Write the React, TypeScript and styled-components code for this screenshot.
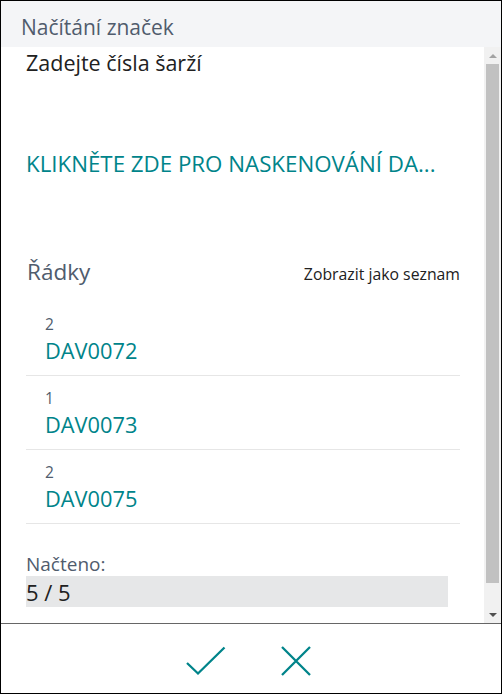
import React from "react";
import styled, { createGlobalStyle } from "styled-components";

const Global = createGlobalStyle`
  html, body { margin: 0; padding: 0; background: #fff; }
  body { font-family: "Open Sans", "Noto Sans", sans-serif; }
  * { box-sizing: border-box; }
`;

const TEAL = "#00848a";
const GRAY = "#505c6d";
const DARK = "#212121";

const Frame = styled.div`
  width: 502px;
  height: 694px;
  border: 1px solid #000;
  display: flex;
  flex-direction: column;
  background: #fff;
  overflow: hidden;
`;

const Header = styled.div`
  height: 46px;
  flex: none;
  background: #f4f5f7;
  padding: 12px 0 0 20px;
  font-size: 21px;
  line-height: 28px;
  color: ${GRAY};
`;

const Body = styled.div`
  flex: 1;
  display: flex;
  min-height: 0;
`;

const Content = styled.div`
  flex: 1;
  display: flex;
  flex-direction: column;
  padding: 2px 24px 0 25px;
`;

const Instruction = styled.div`
  font-size: 21.5px;
  line-height: 28px;
  color: ${DARK};
`;

const ScanLink = styled.div`
  margin-top: 72px;
  font-size: 22.3px;
  line-height: 30px;
  color: ${TEAL};
  white-space: nowrap;
`;

const SectionHead = styled.div`
  margin-top: 78px;
  display: flex;
  align-items: baseline;
  justify-content: space-between;
  padding-left: 1px;
`;

const SectionTitle = styled.div`
  font-size: 22.5px;
  line-height: 30px;
  color: ${GRAY};
`;

const ListToggle = styled.div`
  font-size: 15.8px;
  color: ${DARK};
`;

const List = styled.div`
  margin-top: 15px;
  display: flex;
  flex-direction: column;
`;

const Row = styled.div`
  height: 74px;
  border-bottom: 1px solid #e6e6e6;
  padding: 12px 0 0 19px;
  display: flex;
  flex-direction: column;
`;

const Qty = styled.div`
  font-size: 15.5px;
  line-height: 21px;
  color: ${GRAY};
`;

const Lot = styled.div`
  margin-top: 1px;
  font-size: 21.8px;
  line-height: 30px;
  color: ${TEAL};
`;

const Field = styled.div`
  margin-top: 28px;
  display: flex;
  flex-direction: column;
  padding-right: 12px;
`;

const FieldLabel = styled.div`
  font-size: 19px;
  line-height: 24px;
  color: ${GRAY};
`;

const FieldValue = styled.div`
  height: 31px;
  background: #e6e7e8;
  font-size: 22px;
  line-height: 29px;
  padding: 2px 0 0 0;
  color: ${DARK};
`;

const Scrollbar = styled.div`
  width: 17px;
  flex: none;
  background: #f1f1f1;
  display: flex;
  flex-direction: column;
  align-items: center;
`;

const Arrow = styled.div<{ $down?: boolean }>`
  height: 17px;
  width: 17px;
  flex: none;
  display: flex;
  align-items: center;
  justify-content: center;
  &::after {
    content: "";
    border-left: 4px solid transparent;
    border-right: 4px solid transparent;
    ${(p) => (p.$down ? "border-top: 4px solid #505050;" : "border-bottom: 4px solid #a3a3a3;")}
  }
`;

const Thumb = styled.div`
  width: 13px;
  flex: 1;
  background: #c1c1c1;
  margin: 0 0 23px;
`;

const Footer = styled.div`
  height: 70px;
  flex: none;
  border-top: 1px solid #666;
  display: flex;
  justify-content: center;
  align-items: center;
  gap: 54px;
  padding: 5px 4px 0 0;
`;

const IconButton = styled.button`
  background: none;
  border: none;
  padding: 0;
  display: flex;
  align-items: center;
  justify-content: center;
  cursor: pointer;
`;

const rows = [
  { qty: "2", lot: "DAV0072" },
  { qty: "1", lot: "DAV0073" },
  { qty: "2", lot: "DAV0075" },
];

export default function App() {
  return (
    <>
      <Global />
      <Frame>
        <Header>Načítání značek</Header>
        <Body>
          <Content>
            <Instruction>Zadejte čísla šarží</Instruction>
            <ScanLink>KLIKNĚTE ZDE PRO NASKENOVÁNÍ DA...</ScanLink>
            <SectionHead>
              <SectionTitle>Řádky</SectionTitle>
              <ListToggle>Zobrazit jako seznam</ListToggle>
            </SectionHead>
            <List>
              {rows.map((r) => (
                <Row key={r.lot}>
                  <Qty>{r.qty}</Qty>
                  <Lot>{r.lot}</Lot>
                </Row>
              ))}
            </List>
            <Field>
              <FieldLabel>Načteno:</FieldLabel>
              <FieldValue>5 / 5</FieldValue>
            </Field>
          </Content>
          <Scrollbar>
            <Arrow />
            <Thumb />
            <Arrow $down />
          </Scrollbar>
        </Body>
        <Footer>
          <IconButton aria-label="OK">
            <svg width="40" height="30" viewBox="0 0 40 30">
              <path d="M1 17 L12 27.5 L38.5 1.5" fill="none" stroke={TEAL} strokeWidth="2.3" />
            </svg>
          </IconButton>
          <IconButton aria-label="Zrušit">
            <svg width="32" height="32" viewBox="0 0 32 32">
              <path d="M2 2 L30 30 M30 2 L2 30" fill="none" stroke={TEAL} strokeWidth="2.3" />
            </svg>
          </IconButton>
        </Footer>
      </Frame>
    </>
  );
}
